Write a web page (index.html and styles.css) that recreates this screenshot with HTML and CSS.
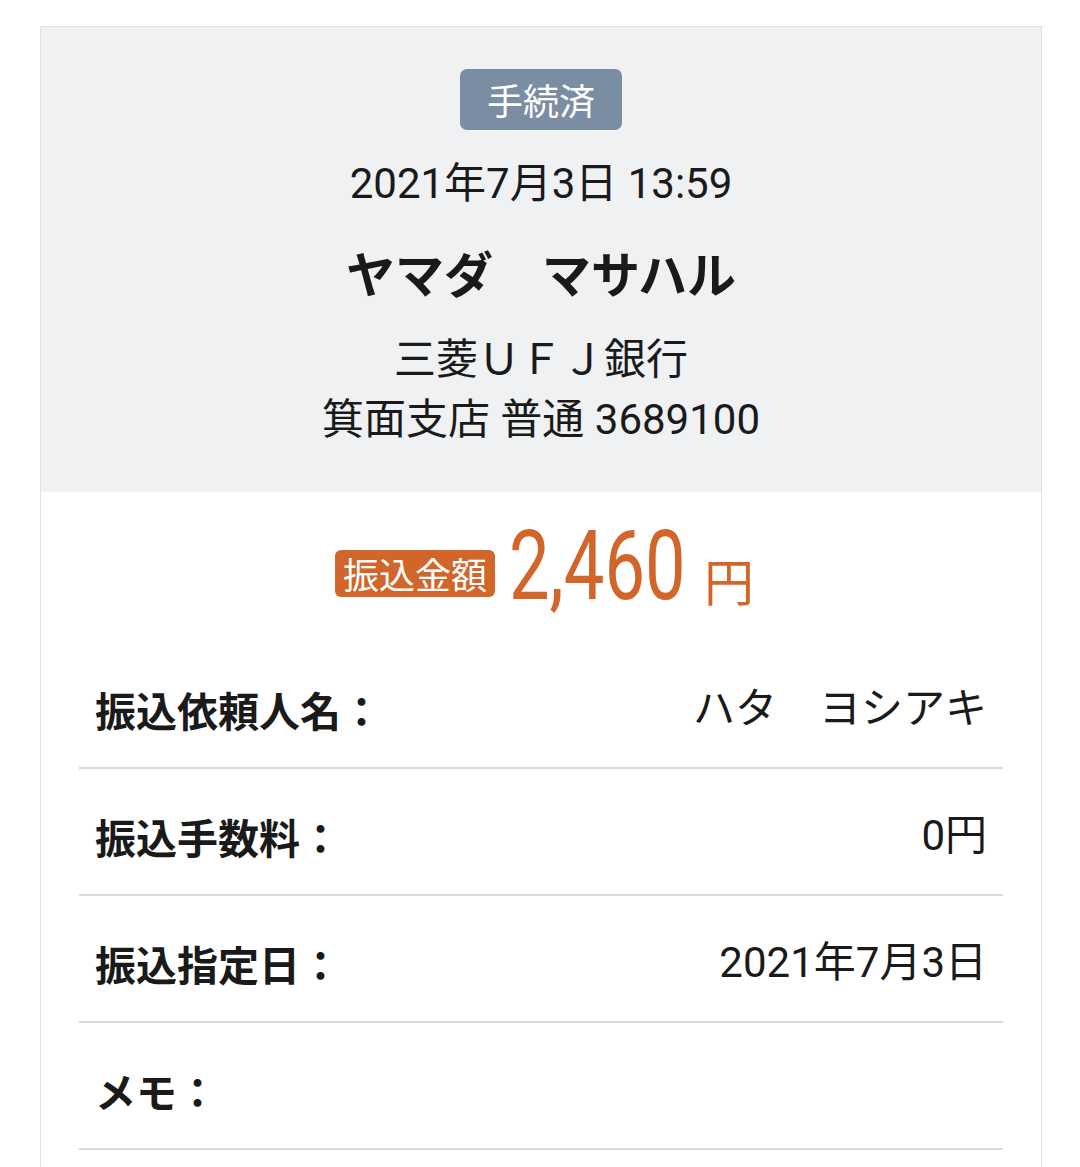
FILE: index.html
```html
<!DOCTYPE html>
<html lang="ja">
<head>
<meta charset="utf-8">
<title>振込明細</title>
<link rel="stylesheet" href="styles.css">
</head>
<body>
<div class="card">
  <div class="head">
    <div class="status">手続済</div>
    <div class="date">2021年7月3日 13:59</div>
    <div class="name">ヤマダ　マサハル</div>
    <div class="bank">
      <div class="bank-line">三菱ＵＦＪ銀行</div>
      <div class="bank-line">箕面支店 普通 3689100</div>
    </div>
  </div>
  <div class="body">
    <div class="amount">
      <span class="amount-label">振込金額</span>
      <span class="amount-num"><span class="amount-num-inner">2,460</span></span>
      <span class="amount-yen">円</span>
    </div>
    <div class="rows">
      <div class="row"><span class="label">振込依頼人名：</span><span class="value">ハタ　ヨシアキ</span></div>
      <div class="row"><span class="label">振込手数料：</span><span class="value">0円</span></div>
      <div class="row"><span class="label">振込指定日：</span><span class="value">2021年7月3日</span></div>
      <div class="row"><span class="label">メモ：</span><span class="value"></span></div>
    </div>
  </div>
</div>
</body>
</html>
```

FILE: styles.css
```css
html, body {
  margin: 0;
  padding: 0;
  background: #ffffff;
}
body {
  font-family: Roboto, "Noto Sans CJK JP", sans-serif;
  color: #1a1a1a;
  padding-top: 26px;
}
.card {
  margin-left: 40px;
  width: 1000px;
  border: 1px solid #e2e2e2;
  border-bottom: none;
  background: #ffffff;
}
.head {
  background: #eff1f3;
  padding: 42px 0 42px;
  display: flex;
  flex-direction: column;
  align-items: center;
}
.status {
  background: #7b8da2;
  color: #ffffff;
  font-family: "Noto Sans CJK JP", sans-serif;
  font-size: 36px;
  line-height: 61px;
  height: 61px;
  padding: 0 27px;
  border-radius: 7px;
}
.date {
  margin-top: 24px;
  font-size: 42px;
  line-height: 60px;
}
.name {
  margin-top: 28px;
  font-family: "Noto Sans CJK JP", sans-serif;
  font-weight: 700;
  font-size: 49px;
  line-height: 60px;
}
.bank {
  margin-top: 28px;
  text-align: center;
  font-size: 42px;
  line-height: 60px;
}
.body {
  padding-bottom: 60px;
}
.amount {
  display: flex;
  justify-content: center;
  align-items: flex-end;
  padding: 26px 0 27px 7px;
}
.amount-label {
  background: #d2662a;
  color: #ffffff;
  font-family: "Noto Sans CJK JP", sans-serif;
  font-size: 36px;
  line-height: 47px;
  height: 47px;
  padding: 0 8px;
  border-radius: 6px;
  margin-bottom: 18px;
}
.amount-num {
  display: block;
  width: 177px;
  height: 97px;
  margin-left: 14px;
  overflow: visible;
  white-space: nowrap;
}
.amount-num-inner {
  display: inline-block;
  font-family: Roboto, sans-serif;
  font-size: 97px;
  line-height: 97px;
  color: #d2662a;
  transform: scaleX(0.745);
  transform-origin: 0 0;
}
.amount-yen {
  margin-left: 18px;
  font-family: "Noto Sans CJK JP", sans-serif;
  font-size: 50px;
  line-height: 50px;
  color: #d2662a;
  margin-bottom: 11px;
}
.rows {
  margin: 0 38px;
}
.row {
  display: flex;
  justify-content: space-between;
  align-items: center;
  height: 125px;
  box-sizing: content-box;
  padding: 0 16px;
  border-bottom: 2px solid #d9d9d9;
}
.row > span {
  padding-top: 9px;
}
.label {
  font-family: "Noto Sans CJK JP", sans-serif;
  font-weight: 700;
  font-size: 41px;
  line-height: 56px;
}
.value {
  font-size: 42px;
  line-height: 56px;
}
```
